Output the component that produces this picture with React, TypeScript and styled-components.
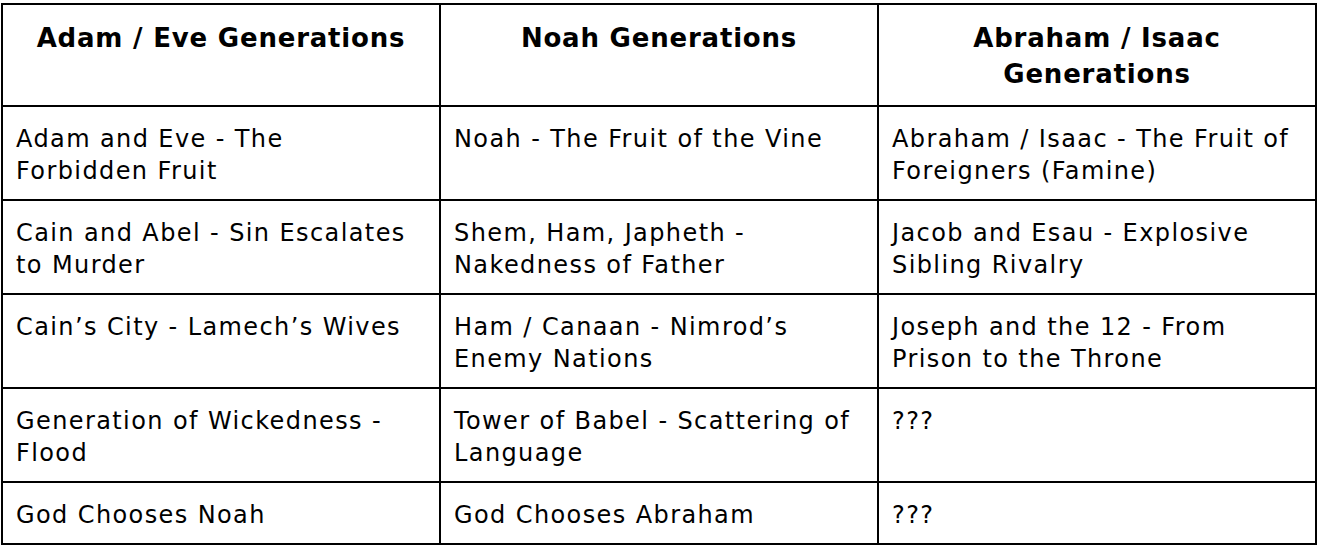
import styled, { createGlobalStyle } from "styled-components";

const GlobalStyle = createGlobalStyle`
  html, body {
    margin: 0;
    padding: 0;
    background: #fff;
  }
  body {
    font-family: "DejaVu Sans", "Liberation Sans", sans-serif;
    color: #000;
  }
`;

const headers = [
  ["Adam / Eve Generations"],
  ["Noah Generations"],
  ["Abraham / Isaac", "Generations"],
];

const rows: string[][][] = [
  [
    ["Adam and Eve - The", "Forbidden Fruit"],
    ["Noah - The Fruit of the Vine"],
    ["Abraham / Isaac - The Fruit of", "Foreigners (Famine)"],
  ],
  [
    ["Cain and Abel - Sin Escalates", "to Murder"],
    ["Shem, Ham, Japheth -", "Nakedness of Father"],
    ["Jacob and Esau - Explosive", "Sibling Rivalry"],
  ],
  [
    ["Cain\u2019s City - Lamech\u2019s Wives"],
    ["Ham / Canaan - Nimrod\u2019s", "Enemy Nations"],
    ["Joseph and the 12 - From", "Prison to the Throne"],
  ],
  [
    ["Generation of Wickedness -", "Flood"],
    ["Tower of Babel - Scattering of", "Language"],
    ["???"],
  ],
  [["God Chooses Noah"], ["God Chooses Abraham"], ["???"]],
];

const Lines = ({ lines }: { lines: string[] }) => (
  <>
    {lines.map((line, i) => (
      <Line key={i}>{line}</Line>
    ))}
  </>
);

export default function App() {
  return (
    <Page>
      <GlobalStyle />
      <Table>
        <thead>
          <tr>
            {headers.map((h, i) => (
              <HeadCell key={i}>
                <Lines lines={h} />
              </HeadCell>
            ))}
          </tr>
        </thead>
        <tbody>
          {rows.map((row, r) => (
            <tr key={r}>
              {row.map((cell, c) => (
                <Cell key={c}>
                  <Lines lines={cell} />
                </Cell>
              ))}
            </tr>
          ))}
        </tbody>
      </Table>
    </Page>
  );
}

const Page = styled.div`
  padding: 3px 0 0 1px;
  width: 1322px;
  box-sizing: border-box;
`;

const Table = styled.table`
  width: 1316px;
  border-collapse: collapse;
  table-layout: fixed;
`;

const HeadCell = styled.th`
  width: 33.33%;
  border: 2px solid #000;
  padding: 15px 13px 13px;
  vertical-align: top;
  text-align: center;
  font-size: 26px;
  font-weight: 700;
  line-height: 36px;
  letter-spacing: 0.8px;
`;

const Cell = styled.td`
  border: 2px solid #000;
  padding: 16px 13px 12px;
  vertical-align: top;
  text-align: left;
  font-size: 24px;
  font-weight: 400;
  line-height: 32px;
  letter-spacing: 1.4px;
`;

const Line = styled.span`
  display: block;
  white-space: nowrap;
`;
